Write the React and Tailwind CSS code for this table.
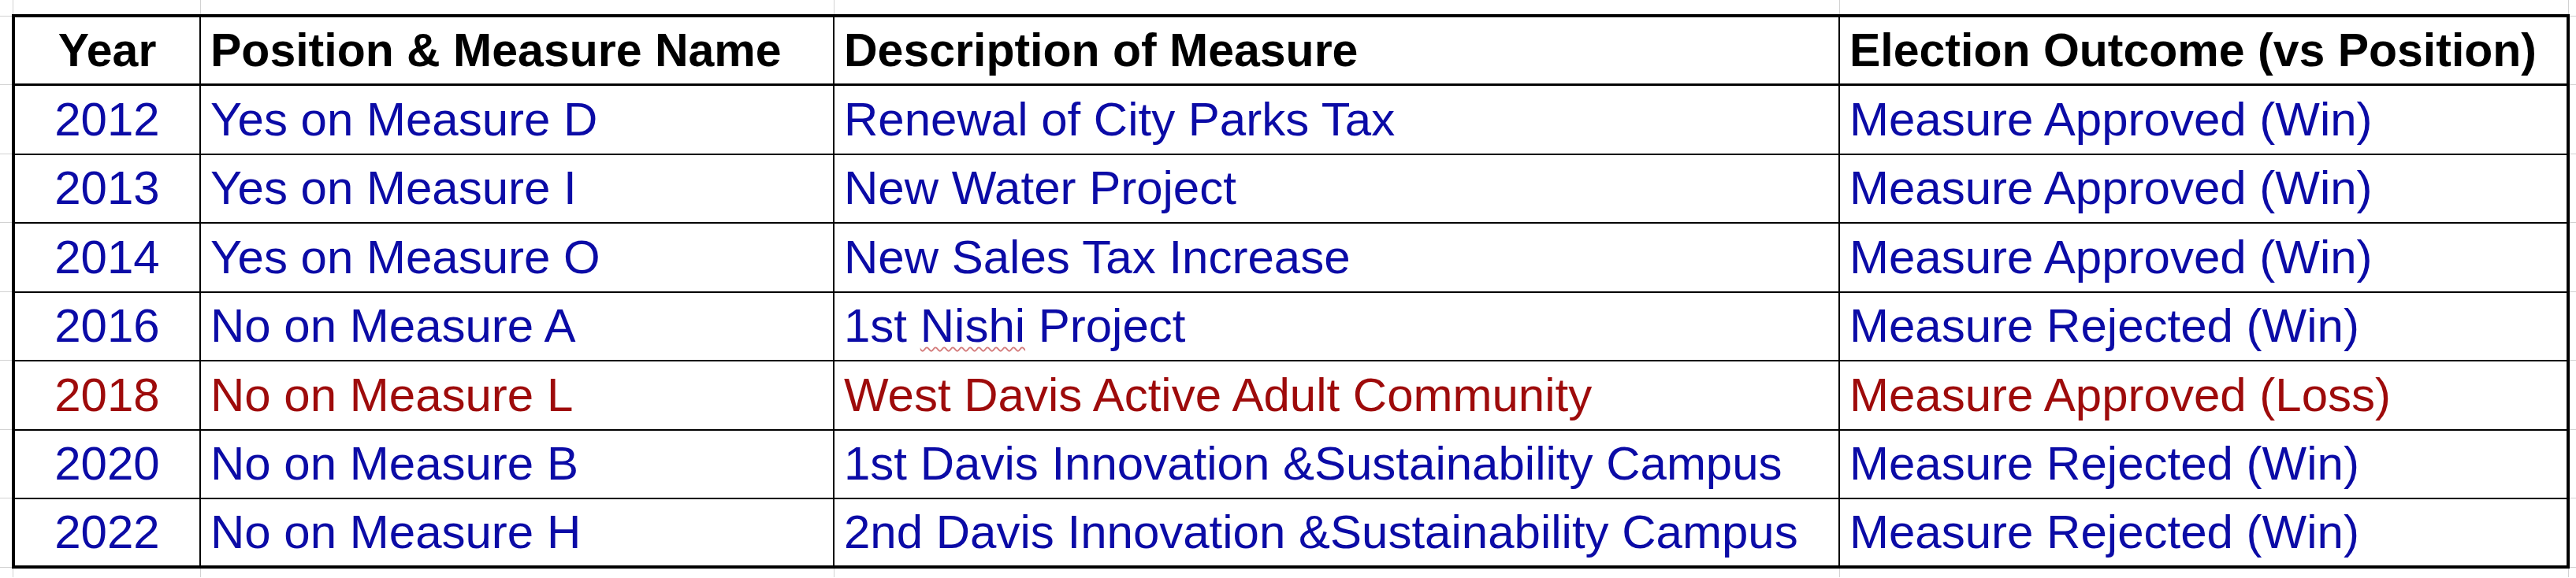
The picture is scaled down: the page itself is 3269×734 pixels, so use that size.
import React from 'react';

const rows = [
  { year: '2012', name: 'Yes on Measure D', desc: 'Renewal of City Parks Tax', outcome: 'Measure Approved (Win)' },
  { year: '2013', name: 'Yes on Measure I', desc: 'New Water Project', outcome: 'Measure Approved (Win)' },
  { year: '2014', name: 'Yes on Measure O', desc: 'New Sales Tax Increase', outcome: 'Measure Approved (Win)' },
  { year: '2016', name: 'No on Measure A', desc: 'nishi', outcome: 'Measure Rejected (Win)' },
  { year: '2018', name: 'No on Measure L', desc: 'West Davis Active Adult Community', outcome: 'Measure Approved (Loss)', loss: true },
  { year: '2020', name: 'No on Measure B', desc: '1st Davis Innovation &Sustainability Campus', outcome: 'Measure Rejected (Win)' },
  { year: '2022', name: 'No on Measure H', desc: '2nd Davis Innovation &Sustainability Campus', outcome: 'Measure Rejected (Win)' },
];

// faint spreadsheet gridlines that poke out around the table
function GridStrip({ height }) {
  return (
    <div className={`flex ${height}`}>
      <div className="w-[17px] shrink-0 border-r border-[#d2d2d2]" />
      <div className="w-[238px] shrink-0 border-r border-[#d2d2d2]" />
      <div className="w-[804px] shrink-0 border-r border-[#d2d2d2]" />
      <div className="w-[1276px] shrink-0 border-r border-[#d2d2d2]" />
      <div className="w-[925px] shrink-0 border-r border-[#d2d2d2]" />
      <div className="flex-1" />
    </div>
  );
}

function MarginStubs({ width }) {
  return (
    <div className={`flex flex-col ${width}`}>
      <div className="h-[3px] border-b border-[#d2d2d2]" />
      <div className="h-[87px] border-b border-[#d2d2d2]" />
      {[0, 1, 2, 3, 4, 5].map(i => (
        <div key={i} className="h-[87.5px] border-b border-[#d2d2d2]" />
      ))}
      <div className="h-[88px] border-b border-[#d2d2d2]" />
    </div>
  );
}

function Row({ row, last }) {
  const color = row.loss ? 'text-[#9e0b0b]' : 'text-[#0b0ba6]';
  return (
    <div className={`flex text-[60px] ${last ? 'h-[84px]' : 'h-[87.5px] border-b-2 border-black'} ${color}`}>
      <div className="w-[236px] shrink-0 border-r-2 border-black flex items-center justify-center">{row.year}</div>
      <div className="w-[804px] shrink-0 border-r-2 border-black flex items-center pl-3">{row.name}</div>
      <div className="w-[1276px] shrink-0 border-r-2 border-black flex items-center pl-3 whitespace-nowrap">
        {row.desc === 'nishi' ? (
          <span>
            1st{' '}
            <span className="underline decoration-wavy decoration-[#d47c7c] decoration-2 underline-offset-[6px]">Nishi</span>
            {' '}Project
          </span>
        ) : row.desc}
      </div>
      <div className="flex-1 flex items-center pl-3 whitespace-nowrap">{row.outcome}</div>
    </div>
  );
}

export default function App() {
  return (
    <div className="w-[3269px] h-[734px] bg-white overflow-hidden text-[59px] leading-none" style={{ fontFamily: '"Liberation Sans", Arial, sans-serif' }}>
      <GridStrip height="h-[18px]" />
      <div className="flex">
        <MarginStubs width="w-[15px]" />
        <div className="w-[3246px] shrink-0 border-4 border-black">
          <div className="flex h-[87px] border-b-[3px] border-black font-bold text-black">
            <div className="w-[236px] shrink-0 border-r-2 border-black flex items-center justify-center">Year</div>
            <div className="w-[804px] shrink-0 border-r-2 border-black flex items-center pl-3">Position &amp; Measure Name</div>
            <div className="w-[1276px] shrink-0 border-r-2 border-black flex items-center pl-3">Description of Measure</div>
            <div className="flex-1 flex items-center pl-3 whitespace-nowrap">Election Outcome (vs Position)</div>
          </div>
          {rows.map((r, i) => (
            <Row key={r.year} row={r} last={i === rows.length - 1} />
          ))}
        </div>
        <MarginStubs width="flex-1" />
      </div>
      <GridStrip height="h-[11px]" />
    </div>
  );
}
